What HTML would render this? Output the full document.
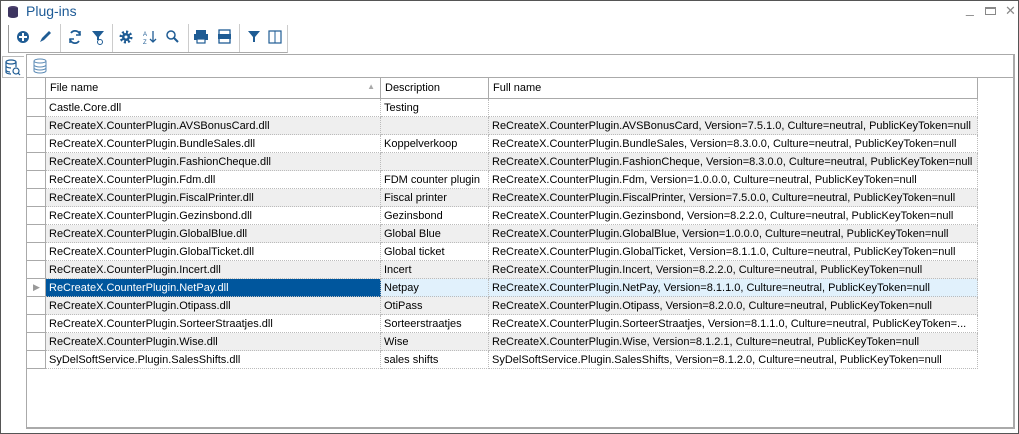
<!DOCTYPE html>
<html><head><meta charset="utf-8"><style>
*{box-sizing:border-box;margin:0;padding:0}
body{width:1019px;height:434px;background:#fff;font-family:"Liberation Sans",sans-serif;font-size:11px;color:#000;position:relative;overflow:hidden}
.win{position:absolute;left:0;top:0;width:1019px;height:434px;border:1px solid #555}
.title{position:absolute;left:26px;top:3px;font-size:14px;color:#1e5b96}
.ctl{position:absolute;top:6px;color:#888}
.tb{position:absolute;left:8px;top:25px;width:280px;height:28px;border-left:1px solid #999;border-bottom:1px solid #aaa;border-right:1px solid #ccc}
.sep{position:absolute;top:24px;width:1px;height:28px;background:#ccc}
.ic{position:absolute}
.grid{position:absolute;left:26px;top:54px;width:989px;height:375px;border:2px solid #aaa;border-left:1px solid #aaa;border-top:1px solid #aaa}
.sub{position:absolute;left:0;top:0;width:986px;height:23px;border-bottom:1px solid #aaa}
.hdr{position:absolute;top:23px;height:21px;border-right:1px solid #aaa;border-bottom:1px solid #aaa;padding:4px 0 0 4px}
.row{position:absolute;left:0;width:950px;height:18px}
.c{position:absolute;top:0;height:18px;padding:3px 0 0 3px;border-right:1px dotted #bbb;border-bottom:1px dotted #bbb;white-space:nowrap;overflow:hidden}
.ind{position:absolute;left:0;width:19px;height:18px;border-right:1px solid #aaa;border-bottom:1px solid #aaa;background:#fff}
.lp{position:absolute;left:2px;top:56px;width:22px;height:22px;border:1px solid #bbb;border-right:none}
</style></head><body>
<div class="win"></div>
<svg class="ic" style="left:6px;top:4px" width="14" height="14"><ellipse cx="7" cy="4" rx="5" ry="2" fill="#4a3f6b"/><rect x="2" y="4" width="10" height="8" fill="#3d3560"/><ellipse cx="7" cy="12" rx="5" ry="2" fill="#3d3560"/></svg>
<div class="title">Plug-ins</div>
<div class="ctl" style="left:966px;top:0px;font-size:14px">_</div>
<div class="ctl" style="left:985px;top:7px;width:11px;height:8px;border:1px solid #888;border-top-width:2px"></div>
<div class="ctl" style="left:1005px;top:3px;font-size:13px">✕</div>
<div class="tb"></div>
<div class="sep" style="left:60px"></div><div class="sep" style="left:112px"></div><div class="sep" style="left:188px"></div><div class="sep" style="left:239px"></div>
<svg style="position:absolute;left:0;top:24px" width="290" height="28" fill="#1f5c94" stroke="#1f5c94">
<circle cx="23" cy="13" r="6" stroke="none"/><path d="M23 9v8M19 13h8" stroke="#fff" stroke-width="2"/>
<path d="M40 18l2-4 7-7 2 2-7 7z" stroke="none"/>
<path d="M80 11a5 5 0 0 0-9-2M70 15a5 5 0 0 0 9 2" fill="none" stroke-width="1.8"/><path d="M80 7v4h-4M70 19v-4h4" fill="none" stroke-width="1.5"/>
<path d="M92 7h12l-5 6v3h-2v-3z" stroke="none"/><circle cx="100" cy="18" r="2.5" fill="none" stroke-width="1"/>
<circle cx="126" cy="13" r="5" stroke="#1f5c94" stroke-width="3" stroke-dasharray="2 1.9" fill="none"/><circle cx="126" cy="13" r="4" stroke="none"/><circle cx="126" cy="13" r="1.5" fill="#fff" stroke="none"/>
<text x="143" y="12" font-size="6" stroke="none" fill="#1f5c94">A</text><text x="143" y="20" font-size="6" stroke="none" fill="#1f5c94">Z</text><path d="M153 7v11M150 15l3 3 3-3" fill="none" stroke-width="1.3"/>
<circle cx="171" cy="11" r="4" fill="none" stroke-width="1.5"/><path d="M174 14l4 4" stroke-width="2"/>
<rect x="196" y="6" width="10" height="4" stroke="none"/><rect x="194" y="10" width="14" height="6" stroke="none"/><rect x="197" y="15" width="8" height="4" fill="#fff" stroke-width="1.2"/>
<rect x="219" y="6" width="11" height="13" fill="none" stroke-width="1.3"/><rect x="218" y="10" width="13" height="5" stroke="none"/>
<path d="M248 7h12l-5 6v5h-2v-5z" stroke="none"/>
<rect x="269" y="7" width="12" height="12" fill="none" stroke-width="1.2"/><path d="M275 7v12" stroke-width="1"/>
</svg>
<div class="lp"></div>
<svg style="position:absolute;left:5px;top:59px" width="16" height="18" fill="none" stroke="#1f5c94" stroke-width="1.2"><ellipse cx="6" cy="3" rx="5" ry="2"/><path d="M1 3v10c0 1 2 2 5 2M11 3v5M1 7c0 1 2 2 5 2M1 11c0 1 2 2 4 2"/><circle cx="11" cy="12" r="3"/><path d="M13 14l2 2"/></svg>
<div class="grid">
<div class="sub"><svg style="position:absolute;left:6px;top:3px" width="14" height="16" fill="none" stroke="#5b8ab5" stroke-width="1"><ellipse cx="7" cy="3" rx="6" ry="2"/><path d="M1 3v10c0 1 3 2 6 2s6-1 6-2V3M1 7c0 1 3 2 6 2s6-1 6-2M1 10c0 1 3 2 6 2s6-1 6-2"/></svg></div>
<div class="hdr" style="left:0;width:19px"></div>
<div class="hdr" style="left:19px;width:335px">File name<span style="position:absolute;right:5px;top:4px;color:#aaa;font-size:8px">▲</span></div>
<div class="hdr" style="left:354px;width:108px">Description</div>
<div class="hdr" style="left:462px;width:489px">Full name</div>
<div id="rows"></div>
</div>
<script>
var d=[["Castle.Core.dll","Testing",""],
["ReCreateX.CounterPlugin.AVSBonusCard.dll","","ReCreateX.CounterPlugin.AVSBonusCard, Version=7.5.1.0, Culture=neutral, PublicKeyToken=null"],
["ReCreateX.CounterPlugin.BundleSales.dll","Koppelverkoop","ReCreateX.CounterPlugin.BundleSales, Version=8.3.0.0, Culture=neutral, PublicKeyToken=null"],
["ReCreateX.CounterPlugin.FashionCheque.dll","","ReCreateX.CounterPlugin.FashionCheque, Version=8.3.0.0, Culture=neutral, PublicKeyToken=null"],
["ReCreateX.CounterPlugin.Fdm.dll","FDM counter plugin","ReCreateX.CounterPlugin.Fdm, Version=1.0.0.0, Culture=neutral, PublicKeyToken=null"],
["ReCreateX.CounterPlugin.FiscalPrinter.dll","Fiscal printer","ReCreateX.CounterPlugin.FiscalPrinter, Version=7.5.0.0, Culture=neutral, PublicKeyToken=null"],
["ReCreateX.CounterPlugin.Gezinsbond.dll","Gezinsbond","ReCreateX.CounterPlugin.Gezinsbond, Version=8.2.2.0, Culture=neutral, PublicKeyToken=null"],
["ReCreateX.CounterPlugin.GlobalBlue.dll","Global Blue","ReCreateX.CounterPlugin.GlobalBlue, Version=1.0.0.0, Culture=neutral, PublicKeyToken=null"],
["ReCreateX.CounterPlugin.GlobalTicket.dll","Global ticket","ReCreateX.CounterPlugin.GlobalTicket, Version=8.1.1.0, Culture=neutral, PublicKeyToken=null"],
["ReCreateX.CounterPlugin.Incert.dll","Incert","ReCreateX.CounterPlugin.Incert, Version=8.2.2.0, Culture=neutral, PublicKeyToken=null"],
["ReCreateX.CounterPlugin.NetPay.dll","Netpay","ReCreateX.CounterPlugin.NetPay, Version=8.1.1.0, Culture=neutral, PublicKeyToken=null"],
["ReCreateX.CounterPlugin.Otipass.dll","OtiPass","ReCreateX.CounterPlugin.Otipass, Version=8.2.0.0, Culture=neutral, PublicKeyToken=null"],
["ReCreateX.CounterPlugin.SorteerStraatjes.dll","Sorteerstraatjes","ReCreateX.CounterPlugin.SorteerStraatjes, Version=8.1.1.0, Culture=neutral, PublicKeyToken=..."],
["ReCreateX.CounterPlugin.Wise.dll","Wise","ReCreateX.CounterPlugin.Wise, Version=8.1.2.1, Culture=neutral, PublicKeyToken=null"],
["SyDelSoftService.Plugin.SalesShifts.dll","sales shifts","SyDelSoftService.Plugin.SalesShifts, Version=8.1.2.0, Culture=neutral, PublicKeyToken=null"]];
var h="";
d.forEach(function(r,i){var t=44+i*18;var bg=i%2?"#efefef":"#fff";var sel=i==10;
h+='<div class="row" style="top:'+t+'px"><div class="ind">'+(sel?'<span style="position:absolute;left:6px;top:3px;color:#999;font-size:9px">▶</span>':'')+'</div>'+
'<div class="c" style="left:19px;width:335px;background:'+(sel?'#00569d;color:#fff':bg)+'">'+r[0]+'</div>'+
'<div class="c" style="left:354px;width:108px;background:'+(sel?'#e1f1fc':bg)+'">'+r[1]+'</div>'+
'<div class="c" style="left:462px;width:489px;background:'+(sel?'#e1f1fc':bg)+'">'+r[2]+'</div></div>';});
document.getElementById("rows").innerHTML=h;
</script>
</body></html>
